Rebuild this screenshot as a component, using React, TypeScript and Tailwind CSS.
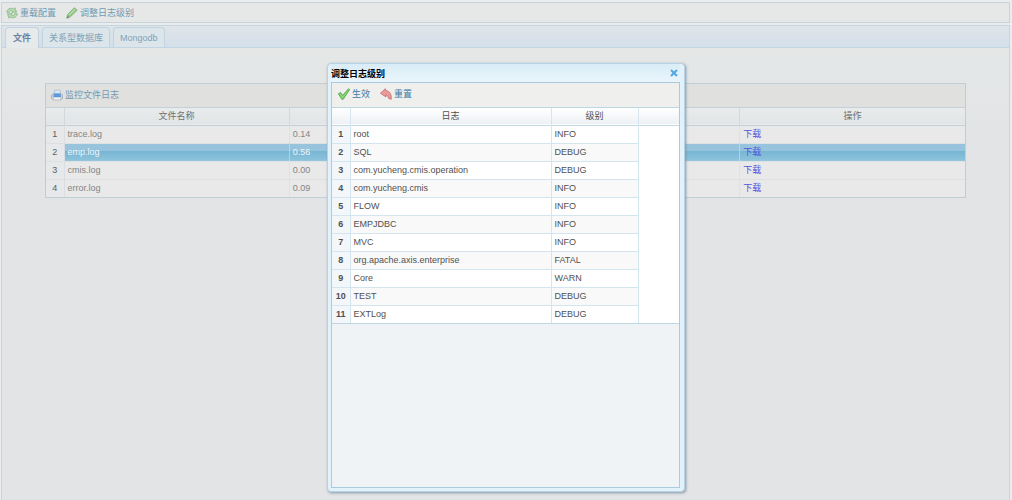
import { ReactNode } from "react";
import clsx from "clsx";

const FILES = [
  { name: "trace.log", size: "0.14" },
  { name: "emp.log", size: "0.56" },
  { name: "cmis.log", size: "0.00" },
  { name: "error.log", size: "0.09" },
];

const LOGGERS = [
  { name: "root", level: "INFO" },
  { name: "SQL", level: "DEBUG" },
  { name: "com.yucheng.cmis.operation", level: "DEBUG" },
  { name: "com.yucheng.cmis", level: "INFO" },
  { name: "FLOW", level: "INFO" },
  { name: "EMPJDBC", level: "INFO" },
  { name: "MVC", level: "INFO" },
  { name: "org.apache.axis.enterprise", level: "FATAL" },
  { name: "Core", level: "WARN" },
  { name: "TEST", level: "DEBUG" },
  { name: "EXTLog", level: "DEBUG" },
];

const TABS = ["文件", "关系型数据库", "Mongodb"];

function ReloadIcon() {
  return (
    <svg className="size-3" viewBox="0 0 16 16" aria-hidden="true">
      <g fill="#b4dcae" stroke="#86b184" strokeWidth="1" strokeLinejoin="round">
        <path d="M1 7 C1 3 6 0 10 2.5 L12 1 L14 7 L7.500 7 L9 5.500 C7 4 5 5 4.500 7 Z" />
        <path d="M15 9 C15 13 10 16 6 13.500 L4 15 L2 9 L8.500 9 L7 10.500 C9 12 11 11 11.500 9 Z" />
      </g>
    </svg>
  );
}

function PencilIcon() {
  return (
    <svg className="size-3" viewBox="0 0 16 16" aria-hidden="true">
      <path d="M1 15 L2 10 L11 1 L15 4 L6 13 Z" fill="#93c884" stroke="#78ab70" strokeLinejoin="round" />
      <path d="M4 10.500 L12 3" stroke="#bfe0b4" strokeWidth="1.5" />
      <path d="M1 15 L2 11.500 L4.500 14 Z" fill="#7c8078" />
    </svg>
  );
}

function PrinterIcon() {
  return (
    <svg className="size-3" viewBox="0 0 16 16" aria-hidden="true">
      <path d="M4 8 L5 1.500 H12 L13 8 Z" fill="#dce8f5" stroke="#a0bbd8" />
      <path d="M1 8 L3 6.500 H13 L15.500 8 V12 L13 14.500 H3 L0.500 12 Z" fill="#cdd3d9" stroke="#9aa1ac" />
      <path d="M4 6 H12.500 L13.500 10.500 H3 Z" fill="#5c9ade" />
      <path d="M4 12 H12 V14 H4 Z" fill="#f4f6f8" />
    </svg>
  );
}

function CheckIcon() {
  return (
    <svg className="size-3" viewBox="0 0 16 16" aria-hidden="true">
      <path
        d="M0.500 7.500 L3.500 6 L6 10 L14 1 L15.500 2 L7 15 L5 15 Z"
        fill="#7fdc6a"
        stroke="#4c8f48"
        strokeLinejoin="round"
      />
    </svg>
  );
}

function UndoIcon() {
  return (
    <svg className="size-3" viewBox="0 0 16 16" aria-hidden="true">
      <path
        d="M0.500 7 L7 1 L8 3.500 C13 4 15.500 8 15 15 L11.500 14 C11 11 10 9.500 8 9.500 L8 12 Z"
        fill="#ec9999"
        stroke="#b96868"
        strokeLinejoin="round"
      />
    </svg>
  );
}

function ToolButton({ icon, children, faded }: { icon: ReactNode; children: ReactNode; faded?: boolean }) {
  return (
    <button
      type="button"
      className={clsx("flex items-center gap-0.5", faded ? "text-[#7199b3]" : "text-[#3b7ca6]")}
    >
      {icon}
      {children}
    </button>
  );
}

function FileGrid() {
  return (
    <section className="mx-[43px] mt-[35px] border border-[#bfcdd4] bg-[#e9e9e9]">
      <div className="flex h-6 items-center border-b border-[#c5d1d8] bg-[#e0e0df] px-[5px] pb-0.5">
        <ToolButton icon={<PrinterIcon />} faded>
          监控文件日志
        </ToolButton>
      </div>
      <table className="w-full table-fixed border-collapse text-left text-[#858585]">
        <colgroup>
          <col className="w-[18px]" />
          <col />
          <col />
          <col />
          <col />
        </colgroup>
        <thead>
          <tr className="h-[17px] border-b border-[#c4ced6] bg-linear-to-b from-[#e9ebeb] to-[#e1e5e7] text-center text-[#707070]">
            <th className="border-r border-[#d2d9dd]" />
            <th className="border-r border-[#d2d9dd] font-normal">文件名称</th>
            <th className="border-r border-[#d2d9dd] font-normal">文件大小</th>
            <th className="border-r border-[#d2d9dd] font-normal">修改时间</th>
            <th className="font-normal">操作</th>
          </tr>
        </thead>
        <tbody>
          {FILES.map((file, i) => (
            <tr
              key={file.name}
              className={clsx(
                "h-[18px] border-b border-[#dce1e3] last:border-b-0",
                i === 1 && "bg-linear-to-b from-[#97c4dc] from-50% via-[#77b6d3] via-50% to-[#8cc2dc] text-[#eef6fa]",
              )}
            >
              <td className="border-r border-[#d8dee1] bg-[#e6e8e9] text-center text-[#606060]">{i + 1}</td>
              <td className="border-r border-[#d8dee1]/60 px-[3px]">{file.name}</td>
              <td className="border-r border-[#d8dee1]/60 px-[3px]">{file.size}</td>
              <td className="border-r border-[#d8dee1]/60" />
              <td className="px-[3px]">
                <a href="#" className="text-[#5353de]">
                  下载
                </a>
              </td>
            </tr>
          ))}
        </tbody>
      </table>
    </section>
  );
}

function LevelDialog() {
  return (
    <div
      role="dialog"
      aria-labelledby="level-title"
      className="absolute inset-x-0 top-[63px] mx-auto flex h-[429px] w-[358px] flex-col rounded border border-[#b5d3e5] bg-[#e2f1fa] p-[3px] pr-1 pt-0 shadow-[1px_1px_3px_#8296a6]"
    >
      <header className="flex h-[18px] shrink-0 items-center justify-between bg-linear-to-b from-[#d9ecf7] to-[#eaf5fb]">
        <h2 id="level-title" className="pt-0.5 font-bold text-black">
          调整日志级别
        </h2>
        <button type="button" aria-label="Close" className="mr-0.5">
          <svg className="size-2" viewBox="0 0 8 8" aria-hidden="true">
            <path d="M1 1 L7 7 M7 1 L1 7" stroke="#4fa8e4" strokeWidth="2" />
          </svg>
        </button>
      </header>
      <div className="flex-1 border border-[#a9cbe0] bg-[#eff3f6]">
        <div className="flex h-6 items-center gap-[10px] bg-[#efefee] px-1.5 pb-0.5">
          <ToolButton icon={<CheckIcon />}>生效</ToolButton>
          <ToolButton icon={<UndoIcon />}>重置</ToolButton>
        </div>
        <div className="border-y border-[#bdd6e4] bg-white">
          <table className="w-full table-fixed border-collapse text-left text-[#505050]">
            <colgroup>
              <col className="w-[18px]" />
              <col className="w-[201px]" />
              <col className="w-[87px]" />
              <col />
            </colgroup>
            <thead>
              <tr className="h-[17px] border-b border-[#c3d8e5] bg-linear-to-b from-white to-[#edf1f5] text-center">
                <th className="border-r border-[#d6e5ee]" />
                <th className="border-r border-[#d6e5ee] font-normal">日志</th>
                <th className="border-r border-[#d6e5ee] font-normal">级别</th>
                <th />
              </tr>
            </thead>
            <tbody>
              {LOGGERS.map((logger, i) => {
                const cell = clsx(
                  "border-r border-[#d3e5ef] px-[3px]",
                  i < LOGGERS.length - 1 && "border-b",
                  i % 2 === 1 && "bg-[#f9f9f9]",
                );
                return (
                  <tr key={logger.name} className="h-[18px]">
                    <td
                      className={clsx(
                        "border-r border-[#d3e5ef] bg-[#f3f7fa] text-center font-bold",
                        i < LOGGERS.length - 1 && "border-b",
                      )}
                    >
                      {i + 1}
                    </td>
                    <td className={cell}>{logger.name}</td>
                    <td className={cell}>{logger.level}</td>
                    <td />
                  </tr>
                );
              })}
            </tbody>
          </table>
        </div>
      </div>
    </div>
  );
}

export default function App() {
  return (
    <div className="relative flex min-h-screen flex-col bg-[#e9edef] pl-px pr-0.5 pt-0.5 font-['Liberation_Sans','Noto_Sans_CJK_SC',sans-serif] text-[9px] leading-3">
      <div className="flex h-[21px] items-center gap-[10px] border border-[#c9d4d9] bg-[#e6e8e7] px-1">
        <ToolButton icon={<ReloadIcon />} faded>
          重载配置
        </ToolButton>
        <ToolButton icon={<PencilIcon />} faded>
          调整日志级别
        </ToolButton>
      </div>
      <main className="mt-0.5 flex-1 border border-b-0 border-[#c7d6de] bg-linear-to-b from-[#e5e9e7] to-[#e3e4e6] to-[100px]">
        <div
          className="flex h-[22px] items-end gap-[3px] border-b border-[#c2d5e2] bg-linear-to-b from-[#dfe5e9] to-[#d4dfe9] px-[3px]"
          role="tablist"
        >
          {TABS.map((tab, i) => (
            <button
              key={tab}
              type="button"
              role="tab"
              aria-selected={i === 0}
              className={clsx(
                "rounded-t-sm border border-b-0 border-[#c0d3de]",
                i === 0
                  ? "-mb-px h-[21px] bg-[#e6eaea] px-[7px] font-bold text-[#6d80a0]"
                  : "h-5 bg-[#dce5ea] px-1.5 text-[#7ea3b9]",
              )}
            >
              {tab}
            </button>
          ))}
        </div>
        <FileGrid />
      </main>
      <LevelDialog />
    </div>
  );
}
